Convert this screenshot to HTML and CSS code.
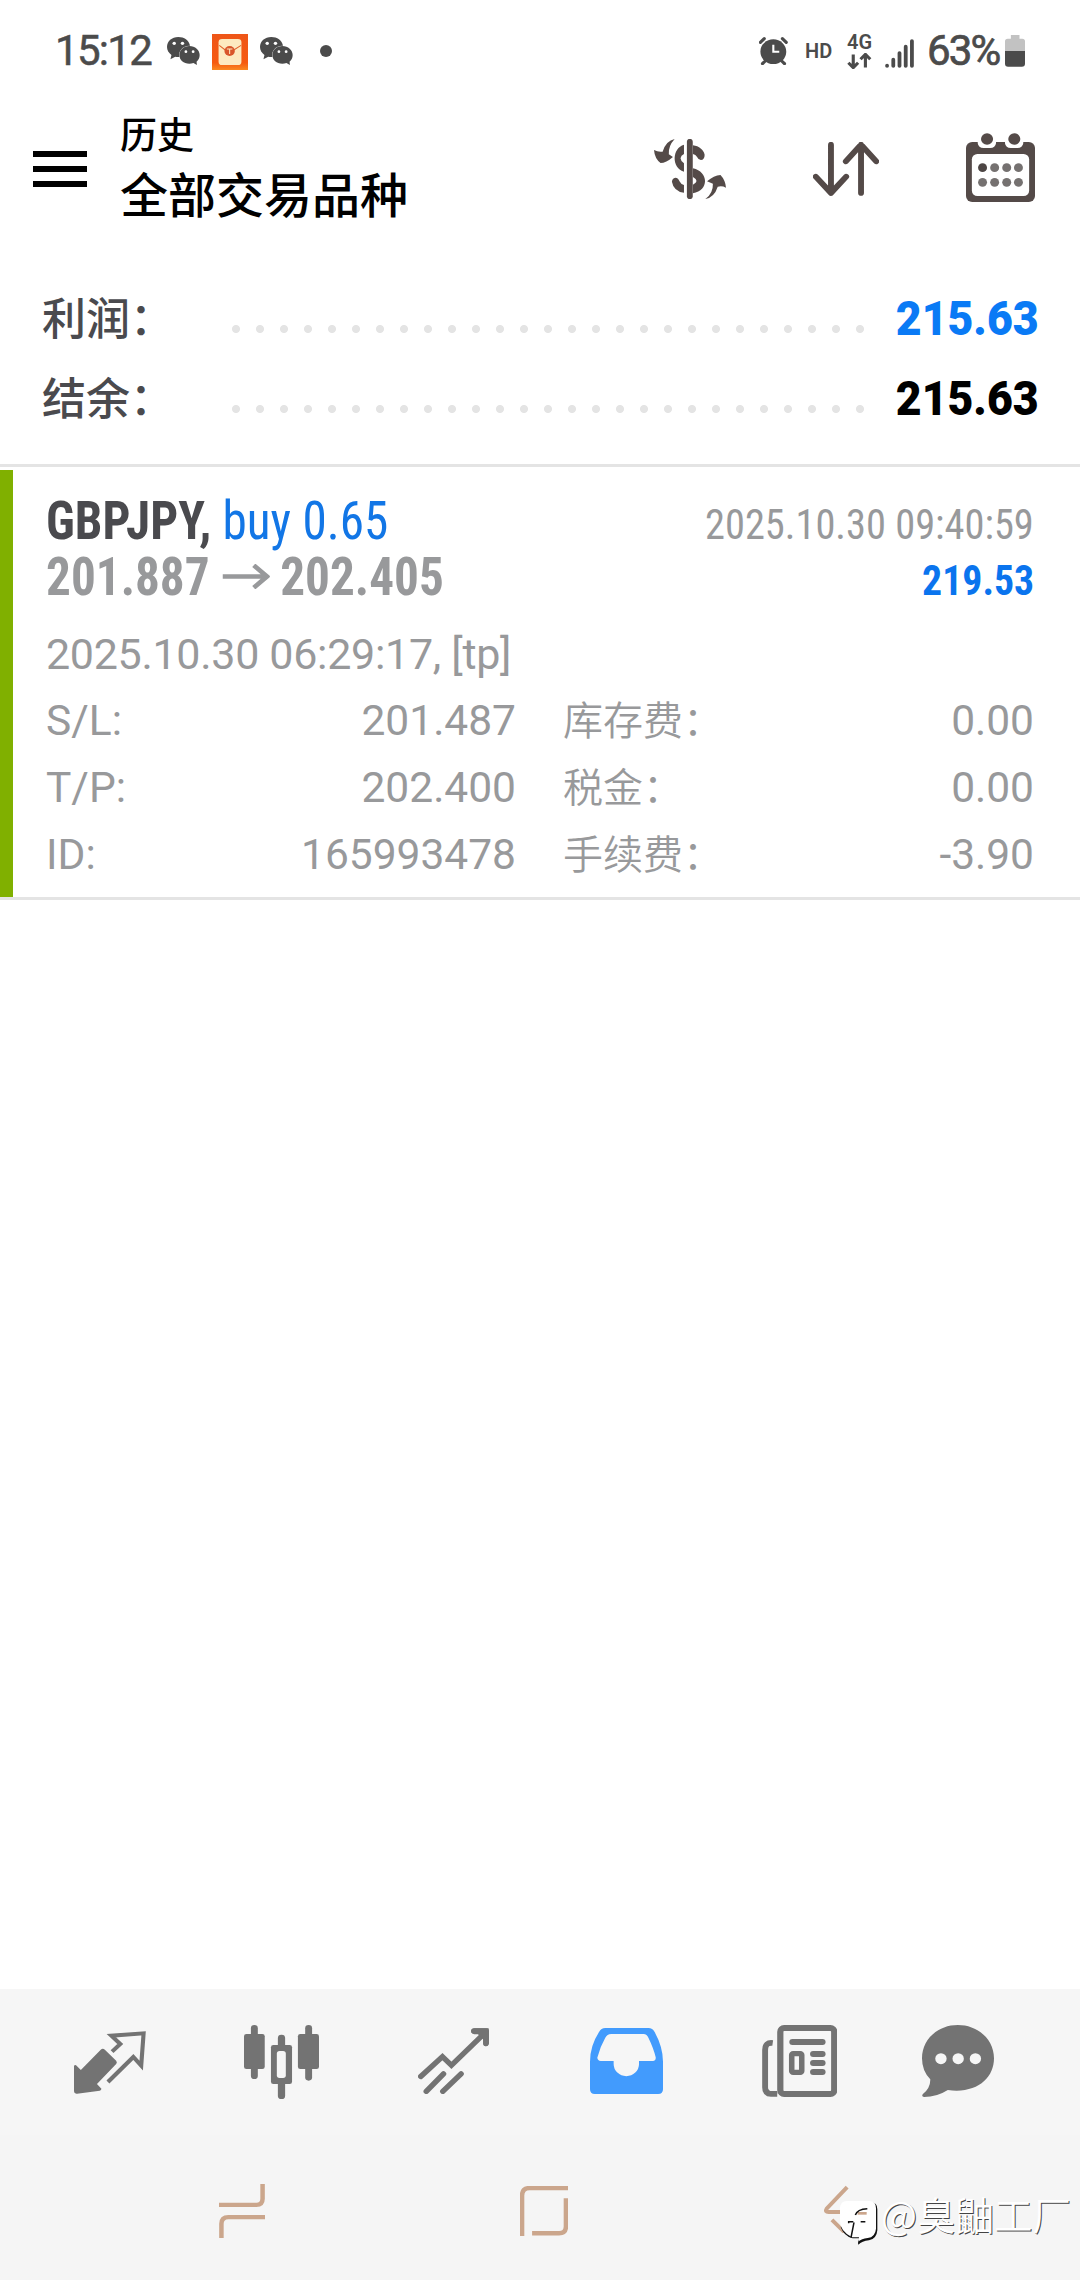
FILE: index.html
```html
<!DOCTYPE html>
<html lang="zh-CN">
<head>
<meta charset="utf-8">
<title>历史</title>
<link rel="stylesheet" href="styles.css">
</head>
<body>
<div class="screen">
  <div class="status">
    <span class="clock">15:12</span>
    <svg class="wechat" viewBox="487 114 96 84" preserveAspectRatio="none"><use href="#wx"/></svg>
    <svg class="packet" viewBox="616 102 104 108" preserveAspectRatio="none">
      <defs><linearGradient id="g1" x1="0" y1="0" x2="0" y2="1"><stop offset="0" stop-color="#ee5618"/><stop offset=".8" stop-color="#f65a10"/><stop offset="1" stop-color="#fa8a20"/></linearGradient></defs>
      <rect x="616" y="102" width="104" height="108" fill="url(#g1)"/>
      <rect x="635" y="117" width="66" height="78" rx="10" fill="#fdeac0"/>
      <path d="M637 136L654 150H679L700 136" fill="none" stroke="#e0602a" stroke-width="3"/>
      <circle cx="667" cy="153" r="15" fill="#d9562a"/>
      <path d="M659 147H675M667 147V162" stroke="#fdeac0" stroke-width="3"/>
    </svg>
    <svg class="wechat" viewBox="487 114 96 84" preserveAspectRatio="none">
      <g id="wx" fill="#4b4b4b">
        <path d="M520 114C501 114 487 127 487 144C487 154 492 162 500 168L497 181L511 173Q517 175 523 174C519 156 533 139 554 140C551 124 537 114 520 114Z"/>
        <path d="M552 141C535 141 523 153 523 168C523 183 535 194 552 194Q558 194 564 192L574 198L573 188C579 183 582 176 582 168C582 153 569 141 552 141Z"/>
        <g fill="#fff"><circle cx="508" cy="133" r="5"/><circle cx="532" cy="133" r="5"/><circle cx="542" cy="158" r="4"/><circle cx="563" cy="158" r="4"/></g>
      </g>
    </svg>
    <i class="dot"></i>
    <svg class="alarm" viewBox="637 111 83 84" preserveAspectRatio="none">
      <g stroke="#4b4b4b" stroke-width="9" stroke-linecap="round" fill="none"><path d="M641 127L652 116M715 127L704 116M655 183L647 191M702 183L710 191"/></g>
      <circle cx="678" cy="155" r="37" fill="#4b4b4b"/><path d="M678 134V155H695" stroke="#fff" stroke-width="6" fill="none"/>
    </svg>
    <span class="hd">HD</span>
    <span class="net"><span class="g4">4G</span>
      <svg viewBox="893 160 72 46" preserveAspectRatio="none"><path d="M911 164V202M897 188L911 202L925 188M946 202V164M932 178L946 164L960 178" stroke="#4b4b4b" stroke-width="9" fill="none"/></svg>
    </span>
    <svg class="signal" viewBox="1005 115 84 87" preserveAspectRatio="none"><g stroke="#4b4b4b" stroke-width="11" stroke-linecap="round"><path d="M1011 195V196M1029 177V196M1047 157V196M1065 138V196M1083 121V196"/></g></svg>
    <span class="pct">63%</span>
    <svg class="battery" viewBox="1353 105 58 96" preserveAspectRatio="none"><path d="M1370 105H1395V116H1403Q1411 116 1411 124V153H1353V124Q1353 116 1361 116H1370Z" fill="#c2c2c2"/><path d="M1353 153H1411V191Q1411 200 1402 200H1362Q1353 200 1353 191Z" fill="#4b4b4b"/></svg>
  </div>

  <header class="header">
    <div class="menu"><i></i><i></i><i></i></div>
    <div class="titles"><div class="sub">历史</div><div class="title">全部交易品种</div></div>
    <svg class="ic-dollar" viewBox="331 417 209 180" preserveAspectRatio="none" fill="#544a48">
      <path d="M435 425V589" stroke="#544a48" stroke-width="17" stroke-linecap="round"/>
      <path d="M444 436C462 438 475 450 478 464Q478 479 467 480Q460 480 456 471Q452 463 444 462Z"/>
      <path d="M418 434C384 444 380 502 418 515V490Q409 485 408 475Q409 466 418 462Z"/>
      <path fill-rule="evenodd" d="M444 505C490 515 492 572 444 580ZM444 531V554Q465 543 444 531Z"/>
      <path d="M383 545Q384 535 393 533Q402 534 405 544Q409 553 418 555V578Q388 574 383 545Z"/>
      <path d="M391 417Q366 422 356 455Q343 457 331 450Q333 476 350 489Q366 489 386 471L374 463Q372 438 391 417Z"/>
      <path d="M480 597Q503 580 502 551L485 544Q505 526 524 525Q538 540 540 563Q528 556 516 560Q506 592 480 597Z"/>
    </svg>
    <svg class="ic-sort" viewBox="793 426 191 162" preserveAspectRatio="none"><path d="M845 434V579M801 530L845 579L889 530M932 579V434M888 484L932 434L976 484" fill="none" stroke="#544a48" stroke-width="17" stroke-linecap="round" stroke-linejoin="round"/></svg>
    <svg class="ic-cal" viewBox="1237 399 200 207" preserveAspectRatio="none">
      <rect x="1237" y="426" width="200" height="180" rx="18" fill="#544a48"/>
      <g fill="#fff"><rect x="1254" y="462" width="166" height="126" rx="16"/><path d="M1271 417H1324V430Q1322 444 1307 444H1288Q1273 444 1271 430ZM1350 417H1403V430Q1401 444 1386 444H1367Q1352 444 1350 430Z"/></g>
      <g fill="#544a48"><circle cx="1298" cy="417" r="17.500"/><circle cx="1377" cy="417" r="17.500"/></g>
      <circle cx="1285" cy="503" r="13" fill="#4d4644"/>
      <g fill="#757170"><circle cx="1320" cy="503" r="13"/><circle cx="1355" cy="503" r="13"/><circle cx="1389" cy="503" r="13"/><circle cx="1285" cy="547" r="13"/><circle cx="1320" cy="547" r="13"/><circle cx="1355" cy="547" r="13"/><circle cx="1389" cy="547" r="13"/></g>
    </svg>
  </header>

  <section class="summary">
    <div class="sum-row"><span class="sum-label">利润：</span><i class="leader"></i><span class="sum-val blue">215.63</span></div>
    <div class="sum-row"><span class="sum-label">结余：</span><i class="leader"></i><span class="sum-val">215.63</span></div>
  </section>

  <article class="deal">
    <div class="line big">
      <div class="lead"><span class="sym">GBPJPY,</span><span class="side">buy 0.65</span></div>
      <span class="date">2025.10.30 09:40:59</span>
    </div>
    <div class="line big">
      <div class="lead"><span class="price">201.887</span>
        <svg class="arrow" viewBox="648 307 141 76" preserveAspectRatio="none"><path d="M648 345H778M741 311L780 345L741 379" fill="none" stroke="#98999b" stroke-width="14"/></svg>
        <span class="price">202.405</span></div>
      <span class="profit">219.53</span>
    </div>
    <div class="line open">2025.10.30 06:29:17, [tp]</div>
    <div class="grid">
      <span>S/L:</span><span class="num">201.487</span><span class="cn">库存费：</span><span class="num">0.00</span>
      <span>T/P:</span><span class="num">202.400</span><span class="cn">税金：</span><span class="num">0.00</span>
      <span>ID:</span><span class="num">165993478</span><span class="cn">手续费：</span><span class="num">-3.90</span>
    </div>
  </article>

  <nav class="tabs">
    <svg class="t1" viewBox="215 183 210 189" preserveAspectRatio="none">
      <path d="M293 239Q299 234 305 239L338 272Q342 277 338 282L282 342L295 356Q295 361 290 362L224 371Q215 372 215 364V288Q217 283 221 286L235 300Z" fill="#737373"/>
      <path d="M326 245L350 222L324 197L418 190L411 287L388 261L314 336" fill="none" stroke="#737373" stroke-width="12" stroke-linejoin="miter"/>
    </svg>
    <svg class="t2" viewBox="709 165 217 222" preserveAspectRatio="none">
      <g fill="#737373"><rect x="729" y="165" width="20" height="162" rx="10"/><rect x="709" y="192" width="60" height="105" rx="7"/><rect x="886" y="165" width="20" height="167" rx="10"/><rect x="865" y="192" width="61" height="105" rx="7"/><rect x="807" y="194" width="21" height="193" rx="10"/><rect x="787" y="225" width="61" height="117" rx="7"/></g><rect x="804" y="243" width="26" height="81" rx="8" fill="#f6f6f6"/>
    </svg>
    <svg class="t3" viewBox="1214 173 206 200" preserveAspectRatio="none"><path d="M1222 320L1285 260L1311 286L1408 188M1376 182H1411V220M1238 365L1288 312M1286 365L1339 312" fill="none" stroke="#737373" stroke-width="16" stroke-linecap="round"/><path d="M1368 182Q1370 174 1378 174H1412Q1420 174 1420 182V220Q1418 228 1411 228Q1404 228 1403 220V207L1388 192H1377Q1369 191 1368 182Z" fill="#737373"/></svg>
    <svg class="t4" viewBox="146 174 210 198" preserveAspectRatio="none"><path fill="#429bfd" fill-rule="evenodd" d="M190 174H314Q326 174 332 186Q356 232 356 275V358Q356 372 342 372H160Q146 372 146 358V275Q146 228 172 186Q178 174 190 174ZM207 192Q195 193 190 203Q175 230 167 263Q168 272 177 273H214V282A36 36 0 0 0 287 282V273H327Q336 271 335 262Q329 235 314 203Q310 193 300 192Z"/></svg>
    <svg class="t5" viewBox="646 165 217 216" preserveAspectRatio="none">
      <path d="M677 219Q655 216 655 240V352Q655 372 672 372H690" fill="none" stroke="#737373" stroke-width="17"/>
      <path d="M664 358L668 363H690V372H660Z" fill="#737373"/>
      <rect x="699" y="174" width="156" height="198" rx="11" fill="none" stroke="#737373" stroke-width="18"/>
      <rect x="725" y="207" width="105" height="18" rx="9" fill="#737373"/><rect x="732" y="251" width="29" height="56" rx="4" fill="none" stroke="#737373" stroke-width="16"/>
      <g fill="#737373"><rect x="785" y="243" width="45" height="18" rx="9"/><rect x="785" y="270" width="45" height="18" rx="9"/><rect x="785" y="297" width="45" height="18" rx="9"/></g>
    </svg>
    <svg class="t6" viewBox="1109 165 209 216" preserveAspectRatio="none"><path fill="#737373" d="M1213 165C1271 165 1318 208 1318 265C1318 325 1268 372 1184 360Q1152 381 1115 381Q1107 379 1111 373Q1134 354 1133 328Q1109 303 1109 265C1109 208 1155 165 1213 165Z"/><g fill="#f6f6f6"><circle cx="1164" cy="266" r="16.500"/><circle cx="1214" cy="266" r="16.500"/><circle cx="1264" cy="266" r="16.500"/></g></svg>
  </nav>

  <div class="sysnav">
    <svg class="recent" viewBox="637 643 133 160" preserveAspectRatio="none"><path d="M637 705H745Q763 705 763 687V643M770 741H664Q644 741 644 761V803" fill="none" stroke="#cba68c" stroke-width="13"/></svg>
    <svg class="home" viewBox="1510 650 139 148" preserveAspectRatio="none"><path d="M1516 798V678Q1516 656 1538 656H1649M1643 686V770Q1643 790 1623 790H1545" fill="none" stroke="#cba68c" stroke-width="13"/></svg>
    <svg class="back" viewBox="72 74 130 144"><path d="M142 80L80 145Q74 155 86 155H200M96 179L136 218" fill="none" stroke="#cba68c" stroke-width="12"/></svg>
    <div class="mark">
      <svg viewBox="120 120 114 132">
        <path d="M160 124H212Q232 124 232 145V208Q230 234 207 238Q186 240 175 251Q172 243 179 232H158Q132 226 122 198Z" fill="#111"/>
        <path d="M140 120H208Q228 120 228 142V203Q226 228 203 231Q184 234 176 241L177 229H156Q120 210 120 180V140Q122 120 140 120Z" fill="#fff"/>
        <path d="M173 157H200" stroke="#cba68c" stroke-width="8"/>
        <path d="M146 187V182H160M166 162Q172 144 202 143M182 182H196M162 184L153 230" fill="none" stroke="#111" stroke-width="4.500"/>
      </svg>
      <span>@臭鼬工厂</span>
    </div>
  </div>
</div>
</body>
</html>
```
FILE: styles.css
```css
*{box-sizing:border-box}
body{margin:0;background:#fff;font-family:Roboto,"Noto Sans CJK SC",sans-serif}
svg{display:block;flex:none}
.screen{width:1080px;height:2280px;display:flex;flex-direction:column;overflow:hidden}
.status{height:102px;display:flex;align-items:center;padding-left:55px;color:#4b4b4b;white-space:nowrap}
.clock{font-size:42px;width:112px;letter-spacing:-1.7px;padding-bottom:2px;-webkit-text-stroke:.5px #4b4b4b}
.wechat{width:33px;height:28px}
.packet{width:36px;height:36px;margin:2px 12px 0 12px}
.dot{width:12px;height:12px;border-radius:50%;background:#4b4b4b;margin-left:27px}
.alarm{width:29px;height:28px;margin-left:427px}
.hd{font-size:20px;font-weight:600;margin-left:17px;width:42px}
.net{width:25px;display:flex;flex-direction:column;gap:3px;padding-top:2px}
.net svg{width:25px;height:16px}
.g4{font-size:20px;line-height:15px;font-weight:600}
.signal{width:29px;height:29px;margin:4px 0 0 13px}
.pct{font-size:42px;width:77px;margin-left:13px;letter-spacing:-1.9px;padding-bottom:2px;-webkit-text-stroke:.7px #4b4b4b}
.battery{width:20px;height:32px;margin-left:1px}
.header{height:134px;display:flex;align-items:center;padding-left:33px}
.menu{width:54px;display:flex;flex-direction:column;gap:9px}
.menu i{height:6px;background:#000}
.titles{margin-left:33px;width:534px;color:#000;font-weight:500;padding-top:8px}
.sub{font-size:37px;line-height:48px}
.title{font-size:48px;line-height:72px}
.ic-dollar{width:72px;height:60px}
.ic-sort{width:66px;height:54px;margin-left:87px}
.ic-cal{width:69px;height:69px;margin:-3px 0 0 87px}
.summary{height:231px;padding:42px 41px 0 42px;border-bottom:3px solid #e4e4e4}
.sum-row{height:80px;display:flex;align-items:center}
.sum-label{font-size:44px;font-weight:500;color:#4a4a4e;width:190px;white-space:nowrap;padding-bottom:5px}
.leader{width:632px;height:8px;margin-top:22px;flex:none;background:radial-gradient(circle at 4px 4px,#e4e4e4 3.6px,transparent 4.4px) 0 0/24px 8px}
.sum-val{margin-left:auto;font-size:48px;font-weight:900;color:#000;transform:scaleX(.93);transform-origin:right}
.blue{color:#0a7af5}
.deal{margin-top:3px;height:430px;border-bottom:3px solid #e4e4e4;padding:20px 46px 0 46px;color:#98999b;background:linear-gradient(#80b000,#80b000) 0 0/13px 100% no-repeat}
.line{display:flex;align-items:baseline;white-space:nowrap}
.big{font-family:"Roboto Condensed",Roboto,sans-serif;font-stretch:75%;height:56px;font-size:53px}
.lead{display:flex;align-items:baseline;transform:scaleX(.929);transform-origin:left}
.sym{font-weight:700;color:#4a4a4e}
.side{color:#1276e6;margin-left:12px}
.date{margin-left:auto;font-size:43px;transform:scaleX(.94);transform-origin:right}
.price{font-weight:700}
.arrow{width:51px;height:25px;margin:18px 11px 0 14px;align-self:flex-start}
.profit{margin-left:auto;font-size:43px;font-weight:700;color:#0a74ee;transform:scaleX(.925);transform-origin:right}
.open{font-size:43px;letter-spacing:-.3px;height:60px;margin-top:27px}
.grid{display:grid;grid-template-columns:150px 320px 1fr 200px;grid-auto-rows:67px;font-size:42.500px;align-items:baseline}
.num{text-align:right}
.cn{font-size:40px;font-weight:350;padding-left:47px;white-space:nowrap}
.tabs{margin-top:auto;height:146px;background:#f6f6f6;display:flex;align-items:flex-start;padding-left:74px}
.t1{width:72px;height:63px;margin-top:42px}
.t2{width:75px;height:74px;margin:36px 0 0 98px}
.t3{width:71px;height:66px;margin:39px 0 0 99px}
.t4{width:73px;height:66px;margin:39px 0 0 101px}
.t5{width:75px;height:72px;margin:36px 0 0 99px}
.t6{width:72px;height:72px;margin:36px 0 0 85px}
.sysnav{height:145px;background:#f5f5f5;display:flex;align-items:flex-start;padding-left:219px;position:relative}
.recent{width:46px;height:54px;margin-top:49px}
.home{width:48px;height:50px;margin:51px 0 0 255px}
.back{width:43px;height:48px;margin:50px 0 0 256px}
.mark{position:absolute;left:840px;top:55px;display:flex;align-items:center;color:#fff;font-size:38.5px;font-family:"Noto Sans CJK SC",sans-serif;font-weight:350;line-height:50px;text-shadow:1px 1px 0 #444;white-space:nowrap}
.mark svg{width:38px;height:44px;margin:11px 3px 0 0}
.mark span{margin-top:-10px}
```
